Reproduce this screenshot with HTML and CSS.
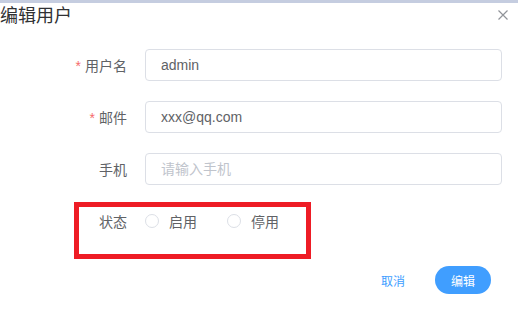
FILE: index.html
```html
<!DOCTYPE html>
<html lang="zh-CN">
<head>
    <meta charset="UTF-8">
    <title>编辑用户</title>
    <link rel="stylesheet" href="styles.css">
</head>
<body>
    <div class="topbar"></div>
    <div class="dialog">
        <div class="dialog-header">
            <span class="dialog-title">编辑用户</span>
            <button class="close-btn" aria-label="关闭">
                <svg width="10" height="10" viewBox="0 0 10 10">
                    <path d="M0.5 0.5 L9.5 9.5 M9.5 0.5 L0.5 9.5" stroke="#909399" stroke-width="1.2" fill="none"/>
                </svg>
            </button>
        </div>

        <form class="form">
            <div class="form-item">
                <label class="form-label required">用户名</label>
                <div class="form-control">
                    <input class="input" type="text" value="admin">
                </div>
            </div>
            <div class="form-item">
                <label class="form-label required">邮件</label>
                <div class="form-control">
                    <input class="input" type="text" value="xxx@qq.com">
                </div>
            </div>
            <div class="form-item">
                <label class="form-label">手机</label>
                <div class="form-control">
                    <input class="input" type="text" placeholder="请输入手机">
                </div>
            </div>
            <div class="form-item">
                <label class="form-label">状态</label>
                <div class="form-control radios">
                    <label class="radio"><span class="radio-dot"></span>启用</label>
                    <label class="radio"><span class="radio-dot"></span>停用</label>
                </div>
            </div>
            <div class="highlight"></div>
        </form>

        <div class="dialog-footer">
            <button class="btn-text" type="button">取消</button>
            <button class="btn-primary" type="button">编辑</button>
        </div>
    </div>
</body>
</html>
```

FILE: styles.css
```css
* {
    margin: 0;
    padding: 0;
    box-sizing: border-box;
}

body {
    font-family: 'Liberation Sans', 'Noto Sans CJK SC', sans-serif;
    background: #ffffff;
    color: #606266;
    width: 518px;
    height: 311px;
    overflow: hidden;
}

.topbar {
    height: 3px;
    background: #c5cde0;
}

.dialog-header {
    display: flex;
    justify-content: space-between;
    align-items: flex-start;
    height: 46px;
    padding-right: 10px;
}

.dialog-title {
    font-size: 18px;
    line-height: 26px;
    color: #303133;
}

.close-btn {
    background: none;
    border: none;
    margin-top: 7px;
    width: 10px;
    height: 10px;
    display: flex;
}

.form {
    position: relative;
    padding-right: 16px;
}

.form-item {
    display: flex;
    align-items: center;
    height: 32px;
    margin-bottom: 20px;
}

.form-label {
    width: 127px;
    margin-right: 18px;
    text-align: right;
    font-size: 14px;
    color: #606266;
}

.form-label.required::before {
    content: '*';
    color: #f56c6c;
    margin-right: 4px;
}

.form-control {
    flex: 1;
}

.input {
    width: 100%;
    height: 32px;
    border: 1px solid #dcdfe6;
    border-radius: 4px;
    padding: 0 15px;
    font-family: inherit;
    font-size: 14px;
    color: #606266;
    outline: none;
}

.input::placeholder {
    color: #c0c4cc;
}

.radios {
    display: flex;
    gap: 30px;
}

.radio {
    display: flex;
    align-items: center;
    font-size: 14px;
    color: #606266;
}

.radio-dot {
    width: 14px;
    height: 14px;
    border: 1px solid #dcdfe6;
    border-radius: 50%;
    margin-right: 10px;
}

.highlight {
    position: absolute;
    left: 74px;
    top: 153px;
    width: 237px;
    height: 57px;
    border: 5px solid #ee1c25;
}

.dialog-footer {
    display: flex;
    justify-content: flex-end;
    align-items: center;
    gap: 30px;
    padding: 9px 27px 0 0;
}

.btn-text {
    background: none;
    border: none;
    font-family: inherit;
    font-size: 12px;
    color: #409eff;
}

.btn-primary {
    width: 56px;
    height: 28px;
    border: none;
    border-radius: 14px;
    background: #409eff;
    color: #ffffff;
    font-family: inherit;
    font-size: 12px;
}
```
